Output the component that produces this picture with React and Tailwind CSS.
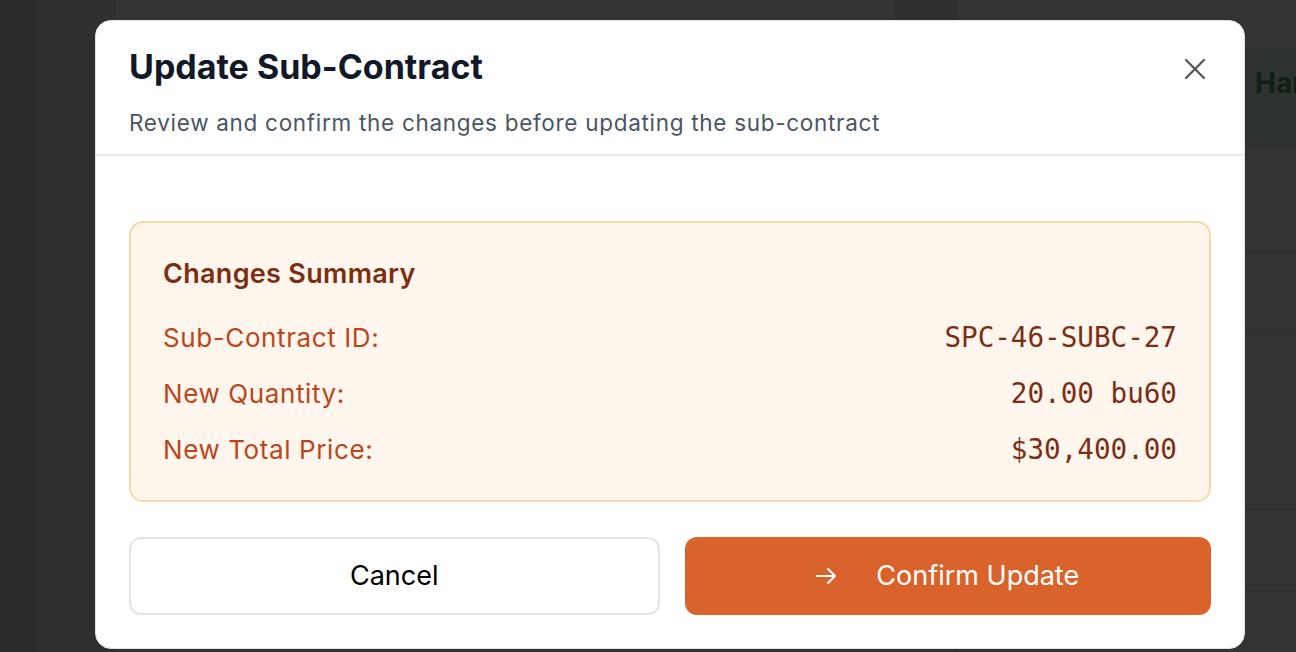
import React from "react";
import { X } from "lucide-react";

const rows = [
  { label: "Sub-Contract ID:", value: "SPC-46-SUBC-27" },
  { label: "New Quantity:", value: "20.00 bu60" },
  { label: "New Total Price:", value: "$30,400.00" },
];

function Backdrop() {
  // dimmed page behind the dialog
  return (
    <div className="flex h-[652px] w-full bg-[#333333]">
      <div className="w-[36px] shrink-0 bg-[#2c2c2c]" />
      <div className="w-[80px] shrink-0 bg-[#2f2f2f]" />
      <div className="w-[779px] shrink-0" />
      <div className="w-[63px] shrink-0 bg-[#303030]" />
      <div className="flex min-w-0 flex-1 flex-col overflow-hidden pt-[48px]">
        <div className="flex h-[100px] items-start whitespace-nowrap bg-[#2f332f] pl-[297px] pt-[14px]">
          <span className="text-[28px] font-bold text-[#0f1f14]">Har</span>
        </div>
        <div className="h-[104px] border-b border-[#2d2d2d]" />
        <div className="h-[78px] border-b border-[#2d2d2d]" />
        <div className="h-[180px] border-b border-[#2d2d2d]" />
        <div className="h-[75px] border-b border-[#2d2d2d]" />
      </div>
    </div>
  );
}

export default function App() {
  return (
    <div className="relative h-[652px] w-full overflow-hidden font-['Inter',sans-serif]">
      <Backdrop />

      {/* Dialog */}
      <div className="absolute left-[95px] top-[20px] flex h-[629px] w-[1150px] flex-col rounded-2xl border border-[#e3e3e3] bg-white">
        <div className="flex items-start justify-between border-b-2 border-[#e5e7eb] px-[33px] pt-[25px] pb-[16px]">
          <div>
            <h2 className="text-[34px] font-bold leading-[42px] text-[#111827]">
              Update Sub-Contract
            </h2>
            <p className="mt-[20px] text-[22.5px] leading-[30px] tracking-[0.7px] text-[#4b5563]">
              Review and confirm the changes before updating the sub-contract
            </p>
          </div>
          <button className="mt-[5px] mr-[-2px] text-[#555555]">
            <X size={36} strokeWidth={1.5} />
          </button>
        </div>

        <div className="flex flex-col px-[33px] pt-[65px]">
          <div className="rounded-[14px] border-2 border-[#f7d9aa] bg-[#fef6ec] px-[32px] pt-[35px] pb-[34px]">
            <h3 className="text-[27px] font-semibold leading-[32px] tracking-[0.3px] text-[#7c2d12]">
              Changes Summary
            </h3>
            <div className="mt-[32px] flex flex-col gap-[24px]">
              {rows.map((r) => (
                <div key={r.label} className="flex items-center justify-between leading-[32px]">
                  <span className="text-[26px] tracking-[0.6px] text-[#b9461c]">{r.label}</span>
                  <span className="font-['DejaVu_Sans_Mono',monospace] text-[27.6px] text-[#7a2e16]">
                    {r.value}
                  </span>
                </div>
              ))}
            </div>
          </div>

          <div className="mt-[35px] flex gap-[25px]">
            <button className="flex h-[78px] flex-1 items-center justify-center rounded-[12px] border-2 border-[#e5e5e5] bg-white text-[27px] text-black">
              Cancel
            </button>
            <button className="flex h-[78px] flex-1 items-center justify-center gap-[40px] rounded-[12px] bg-[#da632c] text-[27px] text-white">
              <svg width="20" height="16" viewBox="0 0 20 16" fill="none" stroke="currentColor" strokeWidth="2" strokeLinecap="round" strokeLinejoin="round">
                <path d="M1 8h18M12 1l7 7-7 7" />
              </svg>
              Confirm Update
            </button>
          </div>
        </div>
      </div>
    </div>
  );
}
